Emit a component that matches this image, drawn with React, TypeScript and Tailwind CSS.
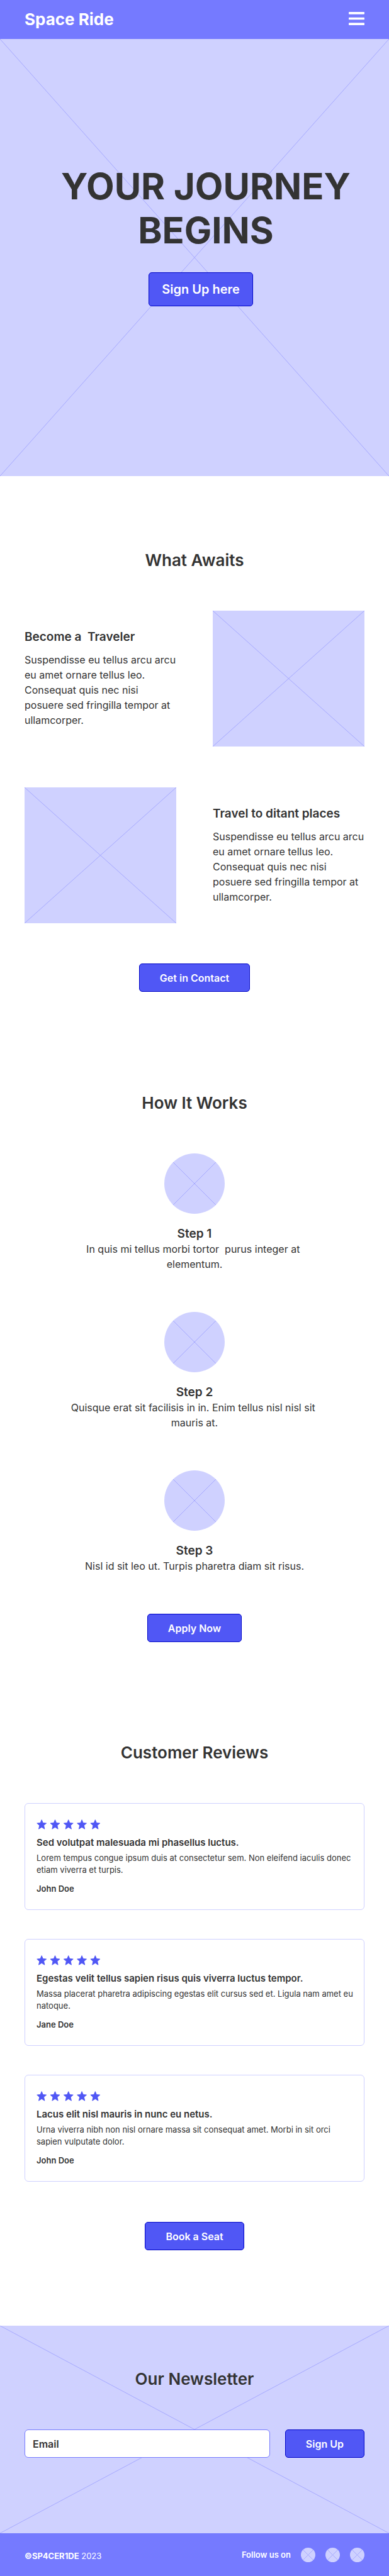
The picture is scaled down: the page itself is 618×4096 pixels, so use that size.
import type { ReactNode } from "react";

function Cross() {
  return (
    <svg
      aria-hidden="true"
      className="absolute inset-0 h-full w-full text-[#a6a9ff]"
      viewBox="0 0 100 100"
      preserveAspectRatio="none"
      fill="none"
      stroke="currentColor"
    >
      <path d="M0 0 100 100M100 0 0 100" vectorEffect="non-scaling-stroke" />
    </svg>
  );
}

function Placeholder({ className }: { className: string }) {
  return (
    <div className={`relative overflow-hidden bg-[#cfd1ff] ${className}`}>
      <Cross />
    </div>
  );
}

function Button({ children }: { children: ReactNode }) {
  return (
    <button
      type="button"
      className="h-[45px] rounded-[5px] border border-[#0005c7] bg-[#5057f5] px-8 text-[16px] leading-6 font-semibold text-white"
    >
      {children}
    </button>
  );
}

function SectionTitle({ children }: { children: ReactNode }) {
  return <h2 className="text-center text-[26px] leading-8 font-semibold">{children}</h2>;
}

const featureText =
  "Suspendisse eu tellus arcu arcu eu amet ornare tellus leo. Consequat quis nec nisi posuere sed fringilla tempor at ullamcorper.";

function Feature({ title, reverse = false }: { title: string; reverse?: boolean }) {
  return (
    <div className={`flex items-center gap-[58px] ${reverse ? "flex-row-reverse" : ""}`}>
      <div className="flex-1 pb-0.5">
        <h3 className="text-[19px] leading-7 font-semibold whitespace-pre-wrap">{title}</h3>
        <p className="mt-2.5 text-[16px] leading-6">{featureText}</p>
      </div>
      <Placeholder className="h-[216px] flex-1" />
    </div>
  );
}

const steps = [
  { title: "Step 1", text: "In quis mi tellus morbi tortor  purus integer at elementum." },
  { title: "Step 2", text: "Quisque erat sit facilisis in in. Enim tellus nisl nisl sit mauris at." },
  { title: "Step 3", text: "Nisl id sit leo ut. Turpis pharetra diam sit risus." },
];

const reviews = [
  {
    title: "Sed volutpat malesuada mi phasellus luctus.",
    text: "Lorem tempus congue ipsum duis at consectetur sem. Non eleifend iaculis donec etiam viverra et turpis.",
    author: "John Doe",
  },
  {
    title: "Egestas velit tellus sapien risus quis viverra luctus tempor.",
    text: "Massa placerat pharetra adipiscing egestas elit cursus sed et. Ligula nam amet eu natoque.",
    author: "Jane Doe",
  },
  {
    title: "Lacus elit nisl mauris in nunc eu netus.",
    text: "Urna viverra nibh non nisl ornare massa sit consequat amet. Morbi in sit orci sapien vulputate dolor.",
    author: "John Doe",
  },
];

function Stars() {
  return (
    <svg
      role="img"
      aria-label="5 out of 5 stars"
      className="h-4 w-[102px] text-[#5057f5]"
      viewBox="0 0 127 20"
      fill="currentColor"
      stroke="currentColor"
      strokeWidth="1.2"
      strokeLinejoin="round"
    >
      {[0, 1, 2, 3, 4].map((i) => (
        <path
          key={i}
          transform={`translate(${i * 26.6} 0)`}
          d="M10 .8 12.6 7 19.3 7.6 14.2 12 15.8 19 10 15.4 4.2 19 5.8 12 .7 7.6 7.4 7Z"
        />
      ))}
    </svg>
  );
}

export default function App() {
  return (
    <div className="bg-white font-['Inter',sans-serif] text-[#333333]">
      <header className="flex h-[62px] items-center justify-between bg-[#757aff] px-[39px] text-white">
        <a href="#top" className="text-[26px] leading-8 font-bold">
          Space Ride
        </a>
        <button type="button" aria-label="Open menu" className="pb-1">
          <svg aria-hidden="true" className="h-[21px] w-[25px]" viewBox="0 0 31 26" fill="currentColor">
            <rect width="31" height="4.5" rx="1" />
            <rect y="10.75" width="31" height="4.5" rx="1" />
            <rect y="21.5" width="31" height="4.5" rx="1" />
          </svg>
        </button>
      </header>

      <main id="top">
        <section className="relative flex h-[695px] flex-col items-center bg-[#cfd1ff] pt-[199px]">
          <Cross />
          <h1 className="relative pl-9 text-center text-[58px] leading-[70px] font-bold">
            YOUR JOURNEY
            <br />
            BEGINS
          </h1>
          <div className="relative mt-8 pl-5">
            <button
              type="button"
              className="h-[54px] rounded-[5px] border border-[#0005c7] bg-[#5057f5] px-5 text-[20px] leading-7 font-semibold text-white"
            >
              Sign Up here
            </button>
          </div>
        </section>

        <section className="px-[39px] pt-[118px]">
          <SectionTitle>What Awaits</SectionTitle>
          <div className="mt-16 flex flex-col gap-[65px]">
            <Feature title="Become a  Traveler" />
            <Feature title="Travel to ditant places" reverse />
          </div>
          <div className="mt-16 flex justify-center">
            <Button>Get in Contact</Button>
          </div>
        </section>

        <section className="px-[39px] pt-[161px]">
          <SectionTitle>How It Works</SectionTitle>
          <ol className="mt-16 flex flex-col items-center gap-16">
            {steps.map((step) => (
              <li key={step.title} className="flex max-w-[402px] flex-col items-center text-center">
                <Placeholder className="size-24 rounded-full" />
                <h3 className="mt-5 text-[19px] leading-6 font-semibold">{step.title}</h3>
                <p className="text-[16px] leading-6 whitespace-break-spaces">{step.text}</p>
              </li>
            ))}
          </ol>
          <div className="mt-16 flex justify-center">
            <Button>Apply Now</Button>
          </div>
        </section>

        <section className="px-[39px] pt-40">
          <SectionTitle>Customer Reviews</SectionTitle>
          <div className="mt-16 flex flex-col gap-[46px]">
            {reviews.map((review) => (
              <article
                key={review.title}
                className="rounded-md border border-[#cfd1ff] pt-[25px] pr-3 pb-[23px] pl-[18px]"
              >
                <Stars />
                <h3 className="mt-2.5 text-[15px] leading-[22px] font-semibold">{review.title}</h3>
                <p className="mt-1 text-[13px] leading-[19px]">{review.text}</p>
                <p className="mt-2.5 text-[13px] leading-5 font-semibold">{review.author}</p>
              </article>
            ))}
          </div>
          <div className="mt-16 flex justify-center">
            <Button>Book a Seat</Button>
          </div>
        </section>

        <section className="relative mt-[120px] h-[330px] bg-[#cfd1ff] px-[39px] pt-[69px]">
          <Cross />
          <div className="relative">
            <SectionTitle>Our Newsletter</SectionTitle>
            <form className="mt-16 flex gap-6" onSubmit={(e) => e.preventDefault()}>
              <input
                type="email"
                aria-label="Email"
                placeholder="Email"
                className="h-[45px] min-w-0 flex-1 rounded-md border border-[#757aff] bg-white px-3 text-[16px] font-semibold placeholder:text-[#333333]"
              />
              <Button>Sign Up</Button>
            </form>
          </div>
        </section>
      </main>

      <footer className="flex items-end justify-between bg-[#757aff] px-[39px] pt-[23px] pb-[22px] text-[13px] leading-[19px] text-white">
        <p>
          <span className="font-bold">©SP4CER1DE</span> 2023
        </p>
        <div className="flex items-center gap-4">
          <span className="font-semibold">Follow us on</span>
          <Placeholder className="size-[23px] rounded-full" />
          <Placeholder className="size-[23px] rounded-full" />
          <Placeholder className="size-[23px] rounded-full" />
        </div>
      </footer>
    </div>
  );
}
